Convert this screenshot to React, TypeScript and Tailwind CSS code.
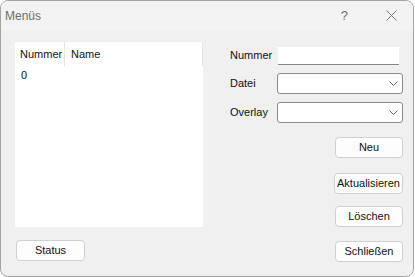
import React from 'react';

const font = { fontFamily: '"Liberation Sans", Arial, sans-serif' };

function Chevron() {
  return (
    <svg width="9" height="5" viewBox="0 0 9 5" className="text-[#5f5f5f]">
      <path d="M0.5 0.5 L4.5 4.5 L8.5 0.5" fill="none" stroke="currentColor" strokeWidth="1" />
    </svg>
  );
}

function Combo() {
  return (
    <div className="flex h-[21px] w-[126px] items-center justify-end rounded-[3px] border border-[#8b8b8b] bg-white pr-[4px]">
      <Chevron />
    </div>
  );
}

function Btn({ label, className = '' }: { label: string; className?: string }) {
  return (
    <div
      className={`flex h-[21px] items-center justify-center rounded-[4px] border border-[#d0d0d0] bg-[#fdfdfd] text-[11px] text-[#111] ${className}`}
    >
      {label}
    </div>
  );
}

export default function App() {
  return (
    <div className="h-[277px] w-[415px] bg-white" style={font}>
      <div className="flex h-[277px] w-[414px] flex-col overflow-hidden rounded-[8px] border border-[#a3a3a3] bg-[#f0f0f0]">
        {/* title bar */}
        <div className="flex h-[29px] items-center bg-[#f3f3f3]">
          <span className="ml-[4px] text-[12px] text-[#6e6e6e]">Menüs</span>
          <span className="ml-auto mr-[38px] text-[13px] text-[#6e6e6e]">?</span>
          <svg width="11" height="11" viewBox="0 0 11 11" className="mr-[16px]">
            <path d="M0.5 0.5 L10.5 10.5 M10.5 0.5 L0.5 10.5" stroke="#7a7a7a" strokeWidth="1" />
          </svg>
        </div>

        <div className="flex pt-[12px]">
          {/* left column */}
          <div className="ml-[14px] flex w-[188px] flex-col">
            <div className="h-[185px] bg-white text-[11px] text-[#111]">
              <div className="flex h-[24px]">
                <div className="flex w-[50px] items-center border-r border-[#e5e5e5] pl-[5px]">Nummer</div>
                <div className="flex flex-1 items-center border-r border-[#e5e5e5] pl-[6px]">Name</div>
              </div>
              <div className="flex h-[18px] items-center pl-[6px]">0</div>
            </div>
            <Btn label="Status" className="ml-[1px] mt-[13px] w-[69px]" />
          </div>

          {/* right column */}
          <div className="ml-[27px] flex w-[173px] flex-col text-[11px] text-[#111]">
            <div className="mt-[4px] flex h-[19px] items-center">
              <span className="w-[48px]">Nummer</span>
              <div className="h-[19px] w-[121px] border-t border-[#ececec] border-b border-b-[#868686] bg-white" />
            </div>
            <div className="mt-[8px] flex items-center">
              <span className="w-[47px]">Datei</span>
              <Combo />
            </div>
            <div className="mt-[8px] flex items-center">
              <span className="w-[47px]">Overlay</span>
              <Combo />
            </div>
            <div className="mt-[14px] flex flex-col items-end">
              <Btn label="Neu" className="w-[68px]" />
              <Btn label="Aktualisieren" className="mt-[15px] w-[69px]" />
              <Btn label="Löschen" className="mt-[12px] w-[68px]" />
              <Btn label="Schließen" className="mt-[14px] w-[68px]" />
            </div>
          </div>
        </div>
      </div>
    </div>
  );
}
